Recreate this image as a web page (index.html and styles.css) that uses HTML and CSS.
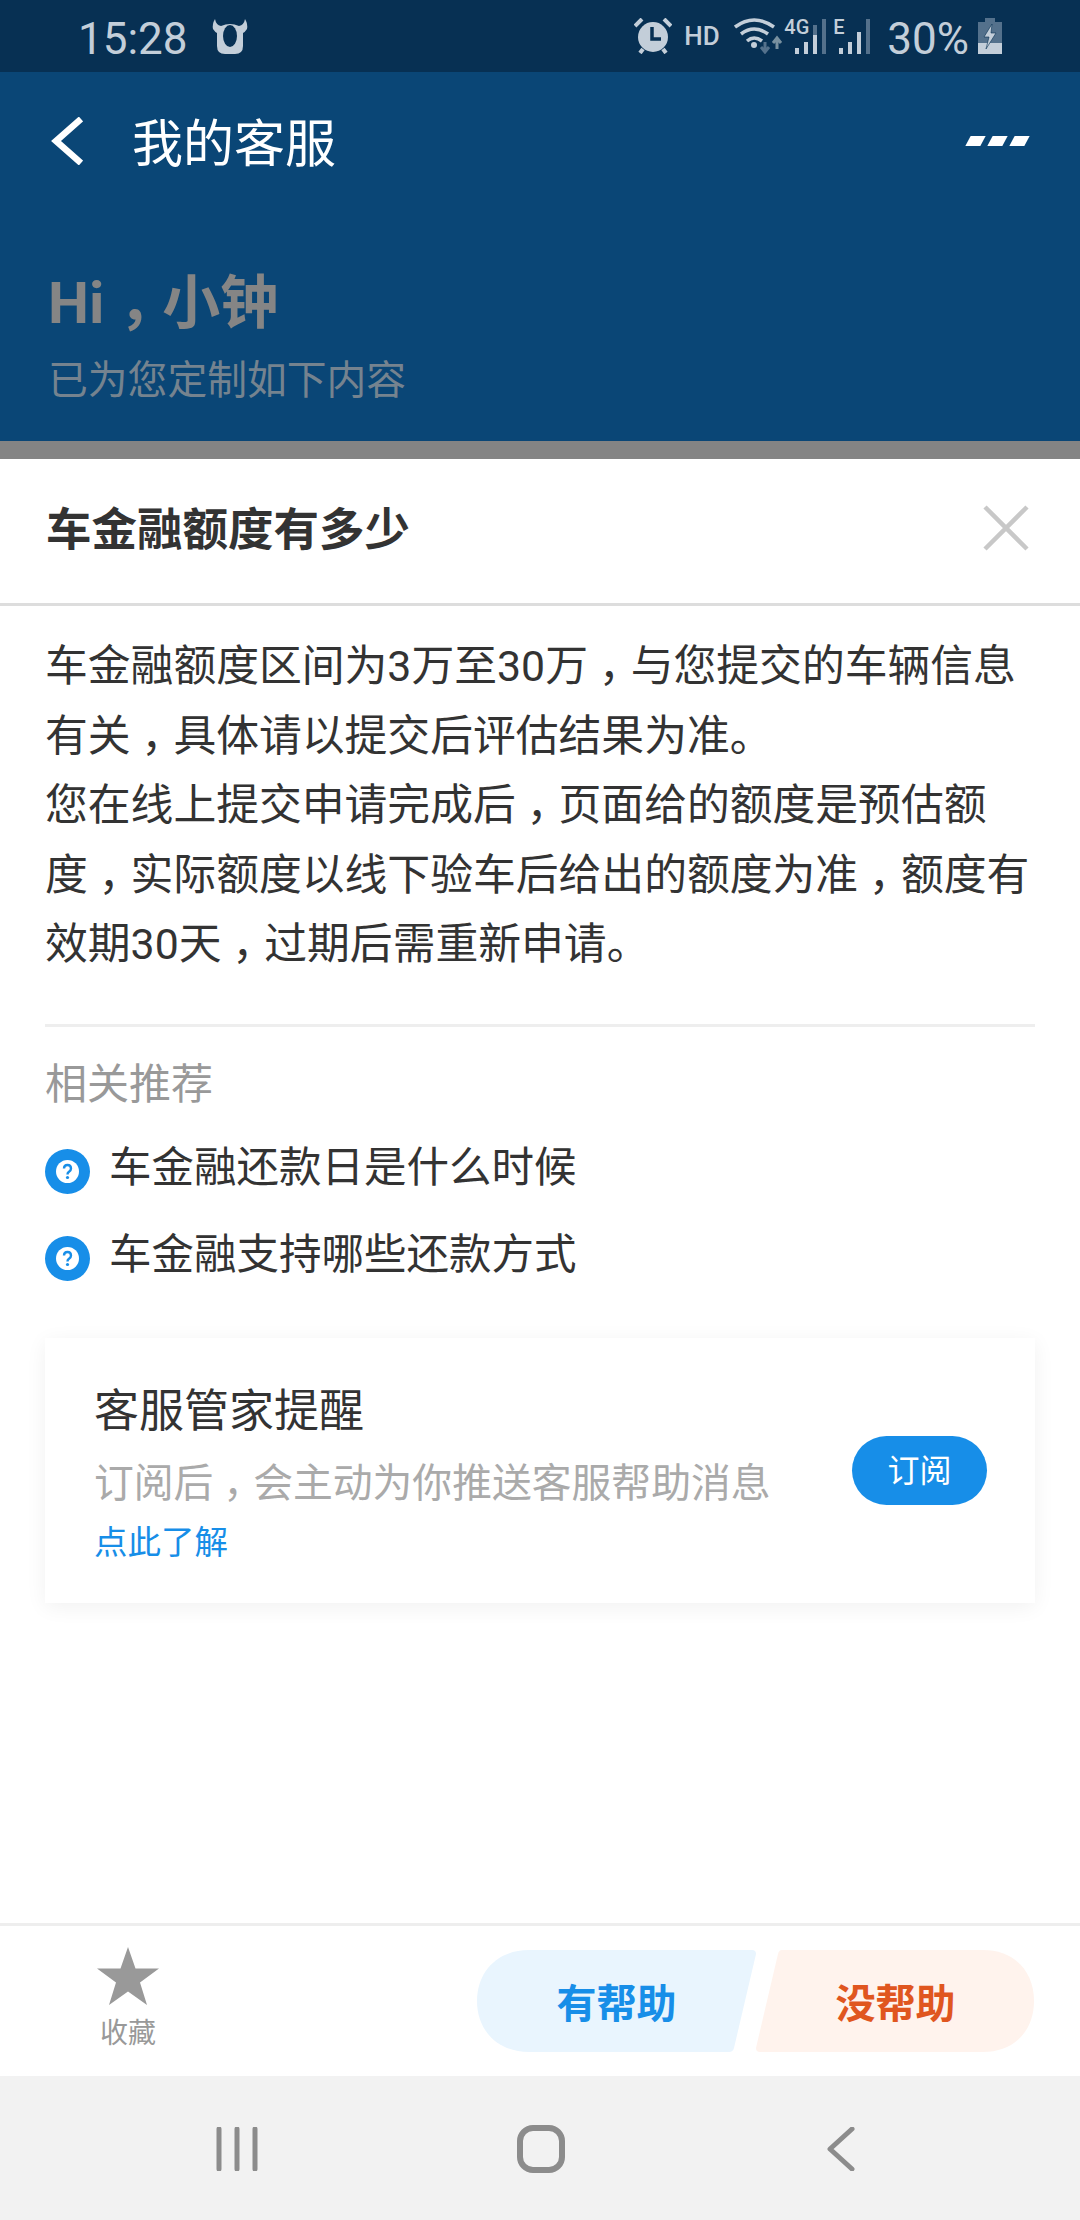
FILE: index.html
```html
<!DOCTYPE html>
<html lang="zh-CN">
<head>
  <meta charset="UTF-8" />
  <meta name="viewport" content="width=device-width, initial-scale=1.0" />
  <title>我的客服</title>
  <link rel="stylesheet" href="styles.css">
</head>
<body>
  <div class="page">
    <div class="status-bar">
      <span class="clock">15:28</span>
      <svg class="ox-icon" width="36" height="36" viewBox="0 0 36 36">
        <path d="M3 1Q4 7 9 8 18 4 27 8 32 7 33 1 36 6 35 11 33 14 31 15V28Q31 36 23 36H13Q5 36 5 28V15Q3 14 1 11 0 6 3 1Z" fill="#c3ced9"/>
        <ellipse cx="18" cy="18" rx="7" ry="11" fill="#073053"/>
      </svg>
      <div class="status-right">
        <svg class="alarm-icon" width="38" height="36" viewBox="0 0 38 36">
          <path d="M1 8 8 1M37 8 30 1M6 35 9 31M32 35 29 31" stroke="#c3ced9" stroke-width="4" fill="none"/>
          <circle cx="19" cy="19" r="15" fill="#c3ced9"/>
          <path d="M18 9V21H27" stroke="#073053" stroke-width="3.5" fill="none"/>
        </svg>
        <span class="hd">HD</span>
        <svg class="wifi-icon" width="50" height="36" viewBox="0 0 50 36">
          <path d="M1 9Q20-5 40 9M7 16Q20 6 34 16M13 23Q20 17 28 23" stroke="#c3ced9" stroke-width="3.5" fill="none"/>
          <circle cx="20" cy="27" r="3" fill="#c3ced9"/>
          <path d="M31 24V33M27 29 31 34 35 29" stroke="#54718c" stroke-width="3" fill="none"/>
          <path d="M43 31V21M39 25 43 20 47 25" stroke="#78909f" stroke-width="3" fill="none"/>
        </svg>
        <div class="signal signal-4g">
          <span class="signal-label">4G</span>
          <svg width="34" height="36" viewBox="0 0 34 36">
            <path d="M2 36V30H6V36ZM11 36V24H15V36ZM20 36V17H24V36Z" fill="#c3ced9"/>
            <path d="M29 36V1H33V36Z" fill="#54718c"/>
            <path d="M20 17V7H24V17Z" fill="#54718c"/>
          </svg>
        </div>
        <div class="signal signal-e">
          <span class="signal-label">E</span>
          <svg width="34" height="36" viewBox="0 0 34 36">
            <path d="M2 36V30H6V36ZM11 36V24H15V36ZM20 36V14H24V36Z" fill="#c3ced9"/>
            <path d="M29 36V1H33V36Z" fill="#54718c"/>
          </svg>
        </div>
        <span class="battery-text">30%</span>
        <svg class="battery-icon" width="24" height="36" viewBox="0 0 24 36">
          <path d="M7 0H17V4H24V25H0V4H7Z" fill="#54718c"/>
          <path d="M0 25H24V36H0Z" fill="#c3ced9"/>
          <path d="M14 6 6 19H11L8 31 18 15H13Z" fill="#c3ced9" stroke="#073053" stroke-width="0.6"/>
        </svg>
      </div>
    </div>

    <header class="app-header">
      <div class="nav-row">
        <svg class="back-icon" width="32" height="48" viewBox="0 0 32 48">
          <path d="M30 2 5 24 30 46" stroke="#fff" stroke-width="6.5" fill="none"/>
        </svg>
        <h1 class="nav-title">我的客服</h1>
        <div class="more-dots"><i></i><i></i><i></i></div>
      </div>
      <div class="greeting">Hi<span class="comma">，</span>小钟</div>
      <div class="greeting-sub">已为您定制如下内容</div>
    </header>
    <div class="sheet-gap"></div>

    <main class="sheet">
      <div class="sheet-head">
        <h2 class="sheet-title">车金融额度有多少</h2>
        <svg class="close-icon" width="46" height="46" viewBox="0 0 46 46">
          <path d="M2 2 44 44M44 2 2 44" stroke="#c8c8c8" stroke-width="4.5" fill="none"/>
        </svg>
      </div>

      <div class="sheet-body">
        <p class="answer">车金融额度区间为3万至30万<span class="comma">，</span>与您提交的车辆信息有关<span class="comma">，</span>具体请以提交后评估结果为准。<br>您在线上提交申请完成后<span class="comma">，</span>页面给的额度是预估额度<span class="comma">，</span>实际额度以线下验车后给出的额度为准<span class="comma">，</span>额度有效期30天<span class="comma">，</span>过期后需重新申请。</p>

        <div class="related">
          <div class="related-title">相关推荐</div>
          <div class="related-item">
            <svg class="help-icon" width="45" height="45" viewBox="0 0 45 45">
              <circle cx="22.5" cy="22.5" r="22.5" fill="#178ee8"/>
              <circle cx="22.5" cy="22.5" r="11.5" fill="#fff"/>
              <path d="M19 19.5Q19 16 22.500 16T26 19.500Q26 21.500 24 22.800 22.500 23.800 22.500 25.500" stroke="#178ee8" stroke-width="2.4" fill="none"/>
              <circle cx="22.5" cy="28.5" r="1.6" fill="#178ee8"/>
            </svg>
            <span>车金融还款日是什么时候</span>
          </div>
          <div class="related-item">
            <svg class="help-icon" width="45" height="45" viewBox="0 0 45 45">
              <circle cx="22.5" cy="22.5" r="22.5" fill="#178ee8"/>
              <circle cx="22.5" cy="22.5" r="11.5" fill="#fff"/>
              <path d="M19 19.5Q19 16 22.500 16T26 19.500Q26 21.500 24 22.800 22.500 23.800 22.500 25.500" stroke="#178ee8" stroke-width="2.4" fill="none"/>
              <circle cx="22.5" cy="28.5" r="1.6" fill="#178ee8"/>
            </svg>
            <span>车金融支持哪些还款方式</span>
          </div>
        </div>

        <div class="notice-card">
          <div class="notice-text">
            <div class="notice-title">客服管家提醒</div>
            <div class="notice-desc">订阅后<span class="comma">，</span>会主动为你推送客服帮助消息</div>
            <a class="notice-link">点此了解</a>
          </div>
          <button class="subscribe-btn">订阅</button>
        </div>
      </div>
    </main>

    <footer class="action-bar">
      <div class="favorite">
        <svg width="62" height="58" viewBox="0 0 62 58">
          <path d="M31 0 38.500 21.500H62L43 35.500 50 58 31 44.500 12 58 19 35.500 0 21.500H23.500Z" fill="#999"/>
        </svg>
        <span>收藏</span>
      </div>
      <div class="feedback">
        <div class="feedback-btn feedback-yes">有帮助</div>
        <div class="feedback-btn feedback-no">没帮助</div>
      </div>
    </footer>

    <nav class="system-nav">
      <svg width="42" height="44" viewBox="0 0 42 44">
        <path d="M3 2V42M21 2V42M39 2V42" stroke="#8c8c8c" stroke-width="5" stroke-linecap="round" fill="none"/>
      </svg>
      <svg width="48" height="48" viewBox="0 0 48 48">
        <rect x="3" y="3" width="42" height="42" rx="13" stroke="#8c8c8c" stroke-width="6" fill="none"/>
      </svg>
      <svg width="28" height="44" viewBox="0 0 28 44">
        <path d="M25 2 3 22 25 42" stroke="#8c8c8c" stroke-width="5" stroke-linecap="round" stroke-linejoin="round" fill="none"/>
      </svg>
    </nav>
  </div>
</body>
</html>
```

FILE: styles.css
```css
* {
  margin: 0;
  padding: 0;
  box-sizing: border-box;
  font-family: Roboto, "Noto Sans CJK SC", sans-serif;
}

body {
  background: #fff;
}

.page {
  width: 1080px;
  height: 2220px;
  display: flex;
  flex-direction: column;
  overflow: hidden;
}

/* the source font sets the full-width comma in the middle of its cell */
.comma {
  font-feature-settings: "halt";
  padding: 0 0.25em;
}

/* status bar */
.status-bar {
  height: 72px;
  flex: none;
  background: #073053;
  color: #c3ced9;
  display: flex;
  align-items: center;
  padding: 0 78px 0 78px;
}

.clock {
  font-size: 44px;
  line-height: 72px;
  width: 134px;
  padding-top: 5px;
}

.status-right {
  margin-left: auto;
  display: flex;
  align-items: center;
}

.hd {
  font-size: 26px;
  font-weight: 500;
  margin-left: 12px;
  width: 38px;
}

.wifi-icon {
  margin-left: 12px;
}

.signal {
  position: relative;
  height: 36px;
  display: flex;
  justify-content: flex-end;
}

.signal-4g {
  width: 40px;
  margin-left: 3px;
}

.signal-e {
  width: 38px;
  margin-left: 6px;
}

.signal-label {
  position: absolute;
  left: 0;
  top: -2px;
  font-size: 20px;
  font-weight: 500;
  line-height: 22px;
}

.signal-4g .signal-label {
  left: -3px;
}

.battery-text {
  font-size: 44px;
  line-height: 72px;
  margin-left: 16px;
  padding-top: 5px;
}

.battery-icon {
  margin-left: 9px;
}

/* blue header, dimmed by the sheet overlay */
.app-header {
  height: 369px;
  flex: none;
  background: #0a4676;
  padding: 0 51px;
}

.nav-row {
  height: 138px;
  display: flex;
  align-items: center;
}

.back-icon {
  margin-right: 49px;
}

.nav-title {
  font-size: 51px;
  font-weight: 400;
  color: #fff;
  line-height: 70px;
  padding-top: 8px;
}

.more-dots {
  margin-left: auto;
  margin-right: 2px;
  display: flex;
  gap: 7px;
}

.more-dots i {
  width: 15px;
  height: 10px;
  background: #fff;
  transform: skewX(-28deg);
}

.greeting {
  margin-top: 58px;
  margin-left: -3px;
  font-size: 58px;
  font-weight: 700;
  line-height: 70px;
  color: #858585;
}

.greeting-sub {
  margin-top: 15px;
  margin-left: -3px;
  font-size: 39.800px;
  line-height: 56px;
  color: #75838f;
}

.sheet-gap {
  height: 18px;
  flex: none;
  background: #848484;
}

/* white sheet */
.sheet {
  flex: 1;
  background: #fff;
}

.sheet-head {
  height: 147px;
  border-bottom: 3px solid #ddd;
  display: flex;
  align-items: center;
  justify-content: space-between;
  padding: 0 51px 6px 46px;
}

.sheet-title {
  font-size: 45.500px;
  font-weight: 700;
  color: #333;
  line-height: 60px;
  margin-top: 6px;
}

.sheet-body {
  padding: 26px 45px 0;
}

.answer {
  font-size: 42.800px;
  line-height: 69.600px;
  color: #333;
  padding-bottom: 44px;
  border-bottom: 3px solid #eee;
}

.related-title {
  margin-top: 28px;
  font-size: 42px;
  line-height: 60px;
  color: #999;
}

.related-item {
  display: flex;
  align-items: center;
  gap: 19px;
  height: 87px;
  font-size: 42.500px;
  color: #333;
}

.related-title + .related-item {
  margin-top: 5px;
}

.help-icon {
  margin-top: 17px;
}

.notice-card {
  margin-top: 44px;
  width: 990px;
  height: 265px;
  background: #fff;
  box-shadow: 0 4px 20px rgba(0, 0, 0, 0.06);
  display: flex;
  align-items: center;
  justify-content: space-between;
  padding: 0 48px 0 49px;
}

.notice-text {
  padding-top: 10px;
}

.notice-title {
  font-size: 45px;
  line-height: 60px;
  color: #333;
}

.notice-desc {
  margin-top: 12px;
  font-size: 39.800px;
  line-height: 60px;
  color: #aaa;
}

.notice-link {
  display: block;
  font-size: 33.500px;
  line-height: 50px;
  margin-top: 4px;
  color: #178ee8;
}

.subscribe-btn {
  width: 135px;
  height: 69px;
  border: none;
  border-radius: 35px;
  background: #178ee8;
  color: #fff;
  font-size: 32px;
  padding-bottom: 5px;
}

/* bottom actions */
.action-bar {
  height: 153px;
  flex: none;
  background: #fff;
  border-top: 3px solid #eee;
  display: flex;
  align-items: flex-start;
  justify-content: space-between;
  padding: 0 45px 0 97px;
}

.favorite {
  width: 62px;
  padding-top: 21px;
  display: flex;
  flex-direction: column;
  align-items: center;
  font-size: 28px;
  color: #999;
}

.favorite span {
  white-space: nowrap;
  line-height: 40px;
  margin-top: 9px;
}

.feedback {
  display: flex;
  margin-top: 24px;
}

.feedback-btn {
  width: 279px;
  height: 102px;
  display: flex;
  align-items: center;
  justify-content: center;
  font-size: 40px;
  font-weight: 700;
}

.feedback-yes {
  background: #e9f5fe;
  color: #178ee8;
  clip-path: path("M52 0H275Q279 0 279 4L257 98Q256 102 252 102H52C20 102 0 80 0 51S20 0 52 0Z");
}

.feedback-no {
  background: #fff3ed;
  color: #e0561f;
  clip-path: path("M26 0H227C259 0 278 22 278 51S259 102 227 102H4Q0 102 0 98L22 4Q23 0 26 0Z");
}

/* android nav */
.system-nav {
  height: 144px;
  flex: none;
  background: #f2f2f2;
  display: flex;
  align-items: center;
  padding: 2px 225px 0 216px;
  justify-content: space-between;
}

.system-nav svg:nth-child(2) {
  margin-right: 4px;
}
```
